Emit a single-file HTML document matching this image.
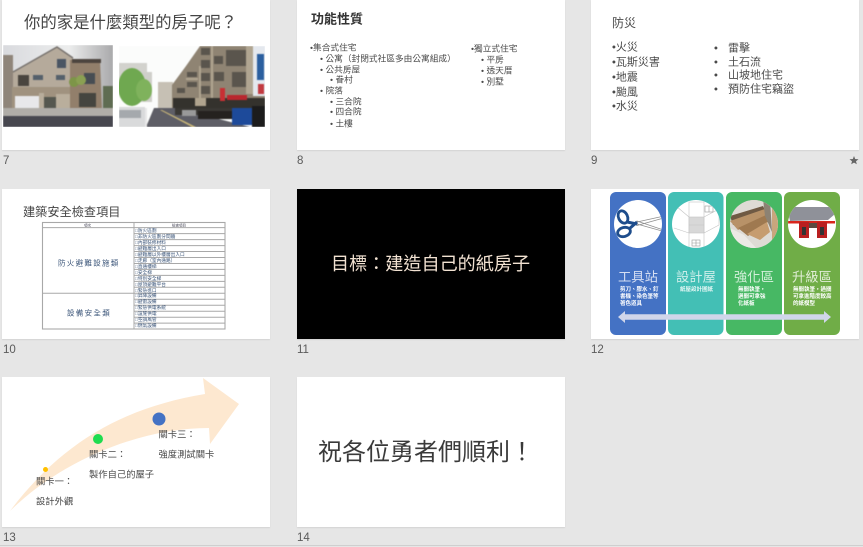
<!DOCTYPE html>
<html lang="zh-Hant"><head><meta charset="utf-8"><title>slides</title>
<style>
html,body{margin:0;padding:0;width:863px;height:547px;overflow:hidden;background:#e6e6e6}
body{position:relative;font-family:"Liberation Sans","Noto Sans CJK TC",sans-serif;color:#4a4a4a}
.s{position:absolute;width:268px;height:150px;background:#fff;box-shadow:0 1px 1px #d4d4d4}
.n{position:absolute;font-size:11.500px;line-height:14px;color:#5a5a5a}
.t{position:absolute;white-space:nowrap;line-height:1;transform:translateY(calc(-50% + 1px));filter:blur(.3px)}
.b{position:absolute;white-space:nowrap;filter:blur(.25px)}
svg{position:absolute;left:0;top:0}
</style></head><body>
<div class="s" style="left:2px;top:0"></div>
<div class="s" style="left:297px;top:0"></div>
<div class="s" style="left:591px;top:0"></div>
<div class="s" style="left:2px;top:189px"></div>
<div class="s" style="left:297px;top:189px;background:#000"></div>
<div class="s" style="left:591px;top:189px"></div>
<div class="s" style="left:2px;top:377px"></div>
<div class="s" style="left:297px;top:377px"></div>
<div style="position:absolute;left:0;top:545px;width:863px;height:1px;background:#cfcfcf"></div>

<div class="n" style="left:3px;top:154px">7</div>
<div class="n" style="left:297px;top:154px">8</div>
<div class="n" style="left:591px;top:154px">9</div>
<div class="n" style="left:3px;top:343px">10</div>
<div class="n" style="left:297px;top:343px">11</div>
<div class="n" style="left:591px;top:343px">12</div>
<div class="n" style="left:3px;top:531px">13</div>
<div class="n" style="left:297px;top:531px">14</div>

<svg width="863" height="547" viewBox="0 0 863 547">
<defs>
<clipPath id="p1"><rect x="3" y="45" width="110" height="82"/></clipPath>
<clipPath id="p2"><rect x="119" y="46" width="146" height="81"/></clipPath>
<clipPath id="c1"><circle cx="638" cy="224" r="24"/></clipPath>
<clipPath id="c2"><circle cx="696" cy="224" r="24"/></clipPath>
<clipPath id="c3"><circle cx="754" cy="224" r="24"/></clipPath>
<clipPath id="c4"><circle cx="812" cy="224" r="24"/></clipPath>
<linearGradient id="sky" x1="0" y1="0" x2="1" y2="0"><stop offset="0" stop-color="#d9dade"/><stop offset=".6" stop-color="#eceded"/><stop offset="1" stop-color="#a9a9ab"/></linearGradient>
</defs>
<!-- star -->
<path d="M854 156l1.200 3 3.300.2-2.500 2 .8 3.100-2.800-1.700-2.800 1.700.8-3.100-2.500-2 3.300-.2z" fill="#666"/>

<!-- photo 1 -->
<g clip-path="url(#p1)"><g style="filter:blur(.5px)">
<rect x="3" y="45" width="110" height="82" fill="url(#sky)"/>
<rect x="3" y="55" width="10" height="53" fill="#8f857a"/>
<polygon points="13,72 57,47 73,58 73,108 13,108" fill="#b5aa9b"/>
<polyline points="13,72 57,47 73,58" fill="none" stroke="#77726e" stroke-width="1.400"/>
<rect x="12" y="87" width="60" height="21" fill="#a0927f"/>
<polygon points="70,60 100,59 102,108 70,108" fill="#927f6b"/>
<rect x="72" y="59" width="29" height="4" fill="#4d453f"/>
<rect x="57" y="59" width="9" height="9" fill="#4a5563"/>
<rect x="18" y="75" width="11" height="11" fill="#49453f"/>
<rect x="33" y="75" width="10" height="5" fill="#55606b"/>
<rect x="56" y="75" width="9" height="5" fill="#55606b"/>
<rect x="84" y="73" width="11" height="11" fill="#474d53"/>
<rect x="79" y="93" width="17" height="14" fill="#45453f"/>
<rect x="15" y="96" width="24" height="12" fill="#e8e8ea"/>
<rect x="39" y="93" width="5" height="19" fill="#b8ad9b"/>
<rect x="44" y="97" width="12" height="14" fill="#55574f"/>
<rect x="56" y="94" width="14" height="18" fill="#b9ae9c"/>
<circle cx="74" cy="82" r="5" fill="#7d9548"/><circle cx="81" cy="80" r="5" fill="#8aa052"/>
<rect x="103" y="86" width="10" height="22" fill="#5f6c52"/>
<rect x="3" y="108" width="110" height="8" fill="#b0ada8"/>
<rect x="3" y="116" width="110" height="11" fill="#47474f"/>
</g></g>
<!-- photo 2 -->
<g clip-path="url(#p2)"><g style="filter:blur(.6px)">
<rect x="119" y="46" width="146" height="81" fill="#fbfcfb"/>
<rect x="119" y="63" width="28" height="25" fill="#d2d2cd"/>
<rect x="140" y="72" width="12" height="30" fill="#cfcfca"/>
<rect x="158" y="82" width="15" height="26" fill="#c6c0b4"/>
<ellipse cx="132" cy="87" rx="14" ry="19" fill="#6fa850"/>
<ellipse cx="144" cy="90" rx="8" ry="11" fill="#7fb25c"/>
<polygon points="172,108 172,85 186,66 200,46 265,46 265,108" fill="#8f8473"/>
<g fill="#5a554d">
<rect x="201" y="48" width="9" height="7"/><rect x="201" y="60" width="9" height="8"/><rect x="201" y="73" width="9" height="8"/><rect x="201" y="86" width="9" height="8"/>
<rect x="226" y="50" width="20" height="16"/><rect x="232" y="72" width="26" height="15"/>
<rect x="214" y="56" width="9" height="8"/><rect x="214" y="72" width="10" height="9"/><rect x="187" y="72" width="10" height="5"/><rect x="187" y="82" width="10" height="5"/><rect x="177" y="88" width="8" height="5"/>
</g>
<g fill="#b0a591">
<rect x="211" y="46" width="2" height="52"/><rect x="199" y="66" width="2" height="32"/><rect x="246" y="46" width="7" height="48"/><rect x="186" y="78" width="12" height="2"/>
</g>
<rect x="173" y="98" width="92" height="10" fill="#34322d"/>
<rect x="195" y="98" width="11" height="8" fill="#b0a48e"/>
<rect x="220" y="88" width="5" height="13" fill="#c83034"/>
<rect x="227" y="95" width="20" height="5" fill="#b9272e"/>
<rect x="253" y="46" width="12" height="50" fill="#e4e8ee"/>
<rect x="257" y="54" width="7" height="26" fill="#2b5f9f"/>
<rect x="258" y="84" width="6" height="10" fill="#c23a40"/>
<polygon points="146,127 154,108 176,108 250,127" fill="#5e5e66"/>
<polygon points="160,110 162,110 196,127 192,127" fill="#c9b678"/>
<rect x="175" y="108" width="90" height="7" fill="#3a3834"/>
<rect x="182" y="110" width="14" height="6" fill="#999"/>
<rect x="198" y="111" width="34" height="8" fill="#25221f"/>
<rect x="232" y="108" width="21" height="17" fill="#1d4a9a"/>
<rect x="252" y="106" width="13" height="21" fill="#1c1c1c"/>
<rect x="119" y="107" width="26" height="20" fill="#d9dadb"/>
<rect x="119" y="110" width="22" height="8" fill="#a5a9ad"/>
<rect x="145" y="108" width="2" height="19" fill="#e8e8e8"/>
</g></g>

<!-- table -->
<g fill="none" stroke="#a8a8a8" stroke-width="1">
<rect x="42.500" y="222.500" width="182.500" height="106.500" stroke-width="1.100"/>
<line x1="134" y1="222" x2="134" y2="329"/>
<line x1="42" y1="227.600" x2="225" y2="227.600"/>
<line x1="42" y1="293.300" x2="134" y2="293.300"/>
<path d="M134 233.600H225M134 239.600H225M134 245.600H225M134 251.500H225M134 257.500H225M134 263.500H225M134 269.400H225M134 275.400H225M134 281.400H225M134 287.300H225M134 293.300H225M134 299.300H225M134 305.200H225M134 311.200H225M134 317.200H225M134 323.100H225"/>
</g>

<!-- slide 12 -->
<rect x="610" y="192" width="56" height="143" rx="6" fill="#4472c4"/>
<rect x="668" y="192" width="55.500" height="143" rx="6" fill="#43bfb5"/>
<rect x="726" y="192" width="56" height="143" rx="6" fill="#47b864"/>
<rect x="784" y="192" width="56" height="143" rx="6" fill="#70ad47"/>
<circle cx="638" cy="224" r="24" fill="#fff"/>
<circle cx="696" cy="224" r="24" fill="#fff"/>
<circle cx="754" cy="224" r="24" fill="#d9cfc2"/>
<circle cx="812" cy="224" r="24" fill="#fff"/>
<!-- scissors -->
<g clip-path="url(#c1)">
<path d="M637 222L662 216.500L662 218.500L637 225.500ZM637 224L662 231L662 229.500L637 221Z" stroke="#8d8d8d" stroke-width=".7" fill="#fff"/>
<ellipse cx="623" cy="217" rx="4.500" ry="6.500" fill="none" stroke="#1e4d8c" stroke-width="2.800" transform="rotate(-25 623 217)"/>
<ellipse cx="624" cy="232" rx="6.500" ry="4.500" fill="none" stroke="#1e4d8c" stroke-width="2.800" transform="rotate(-15 624 232)"/>
<path d="M627 222L637 224M629 229L637 222" stroke="#1e4d8c" stroke-width="3" fill="none"/>
</g>
<!-- paper house -->
<g clip-path="url(#c2)" fill="none" stroke="#c4c4c4" stroke-width=".6">
<rect x="689" y="202" width="15" height="46"/>
<rect x="689" y="217" width="15" height="16" fill="#d8d8d8"/>
<line x1="689" y1="225" x2="704" y2="225"/>
<path d="M704 217L719 209M704 233L719 225M689 217L676 206M689 233L674 228M676 206V194M719 209V225"/>
<rect x="705" y="206" width="8" height="6" stroke="#999"/>
<rect x="692" y="240" width="8" height="6" stroke="#999"/>
<path d="M709 206V212M696 240V246M692 243H700" stroke="#999"/>
</g>
<!-- stairs -->
<g clip-path="url(#c3)">
<rect x="728" y="198" width="52" height="52" fill="#dedbd5"/>
<polygon points="730,216 763,206 766,212 733,225" fill="#6f5a44"/>
<polygon points="730,221 765,209 767,216 738,230" fill="#b89268"/>
<polygon points="738,228 766,215 768,222 748,236" fill="#9f7950"/>
<polygon points="747,234 767,222 770,232 760,240" fill="#c69c6f"/>
<polygon points="763,199 770,199 772,232 765,216" fill="#8c8273"/>
<polygon points="772,199 779,205 779,234 772,240" fill="#c8a67d"/>
<polygon points="730,228 744,235 758,250 736,250" fill="#ebe9e5"/>
</g>
<!-- temple -->
<g clip-path="url(#c4)">
<polygon points="788,212 795,207 835,207 835,214 828,220 790,221" fill="#8f9199"/>
<rect x="788" y="221" width="47" height="2.500" fill="#d8261c"/>
<rect x="799" y="222" width="10" height="16" fill="#b91f20"/>
<rect x="817" y="222" width="10" height="16" fill="#b91f20"/>
<rect x="802" y="227" width="4" height="8" fill="#333"/><rect x="820" y="227" width="4" height="8" fill="#333"/>
<rect x="809" y="223" width="8" height="5" fill="#5c4a40"/>
</g>
<!-- arrow 12 -->
<path d="M618 317L625 311V314.300H824V311L831 317L824 323V319.700H625V323Z" fill="#d0d6ea"/>

<!-- arrow 13 -->
<path d="M10 511C60 445 120 408 205 394L203 378L239 404L210 444L209 428C140 428 62 460 10 511Z" fill="#fde8d0"/>
<circle cx="45.500" cy="469.500" r="2.500" fill="#ffc000"/>
<circle cx="98" cy="439" r="5" fill="#1fdc4f"/>
<circle cx="159" cy="419" r="6.500" fill="#4472c4"/>
</svg>

<!-- slide 7 -->
<div class="t" style="left:24px;top:22px;font-size:16.400px;color:#444">你的家是什麼類型的房子呢？</div>
<!-- slide 8 -->
<div class="t" style="left:311px;top:18px;font-size:13px;font-weight:700;color:#333">功能性質</div>
<div class="t" style="left:310px;top:47px;font-size:8.700px">•集合式住宅</div>
<div class="t" style="left:320px;top:58px;font-size:8.700px;width:136px;overflow:hidden;padding:1px 0">•&nbsp;公寓（封閉式社區多由公寓組成）</div>
<div class="t" style="left:320px;top:69px;font-size:8.700px">•&nbsp;公共房屋</div>
<div class="t" style="left:330px;top:79px;font-size:8.700px">•&nbsp;眷村</div>
<div class="t" style="left:320px;top:90px;font-size:8.700px">•&nbsp;院落</div>
<div class="t" style="left:330px;top:101px;font-size:8.700px">•&nbsp;三合院</div>
<div class="t" style="left:330px;top:111px;font-size:8.700px">•&nbsp;四合院</div>
<div class="t" style="left:330px;top:123px;font-size:8.700px">•&nbsp;土樓</div>
<div class="t" style="left:471px;top:48px;font-size:8.700px">•獨立式住宅</div>
<div class="t" style="left:481px;top:59px;font-size:8.700px">•&nbsp;平房</div>
<div class="t" style="left:481px;top:70px;font-size:8.700px">•&nbsp;透天厝</div>
<div class="t" style="left:481px;top:81px;font-size:8.700px">•&nbsp;別墅</div>
<!-- slide 9 -->
<div class="t" style="left:612px;top:22px;font-size:12px">防災</div>
<div class="t" style="left:612px;top:47px;font-size:11px">•火災</div>
<div class="t" style="left:612px;top:61.500px;font-size:11px">•瓦斯災害</div>
<div class="t" style="left:612px;top:76.500px;font-size:11px">•地震</div>
<div class="t" style="left:612px;top:91.500px;font-size:11px">•颱風</div>
<div class="t" style="left:612px;top:106px;font-size:11px">•水災</div>
<div class="t" style="left:714px;top:48px;font-size:11px">•</div><div class="t" style="left:728px;top:48px;font-size:11px">雷擊</div>
<div class="t" style="left:714px;top:62px;font-size:11px">•</div><div class="t" style="left:728px;top:62px;font-size:11px">土石流</div>
<div class="t" style="left:714px;top:75px;font-size:11px">•</div><div class="t" style="left:728px;top:75px;font-size:11px">山坡地住宅</div>
<div class="t" style="left:714px;top:89px;font-size:11px">•</div><div class="t" style="left:728px;top:89px;font-size:11px">預防住宅竊盜</div>
<!-- slide 10 -->
<div class="t" style="left:23px;top:211px;font-size:12.200px;color:#444">建築安全檢查項目</div>
<div class="t" style="left:58px;top:261.500px;font-size:7.500px;letter-spacing:1.300px;color:#3a5478">防火避難設施類</div>
<div class="t" style="left:67px;top:312px;font-size:7.500px;letter-spacing:1.300px;color:#3a5478">設備安全類</div>
<div class="t" style="left:84px;top:224.500px;font-size:3.500px;color:#445">項次</div>
<div class="t" style="left:172px;top:224.500px;font-size:3.500px;color:#445">檢查項目</div>
<div class="b" style="left:135px;top:228px;font-size:4.700px;line-height:5.960px;color:#3a5478">□防火區劃<br>□非防火區劃分間牆<br>□內部裝修材料<br>□避難層出入口<br>□避難層以外樓層出入口<br>□走廊（室內通路）<br>□直通樓梯<br>□安全梯<br>□特別安全梯<br>□屋頂避難平台<br>□緊急進口<br>□昇降設備<br>□避雷設備<br>□緊急供電系統<br>□設施供電<br>□空調風管<br>□燃氣設備</div>
<!-- slide 11 -->
<div class="t" style="left:331px;top:263px;font-size:18.100px;color:#f2e2d2">目標：建造自己的紙房子</div>
<!-- slide 12 -->
<div class="t" style="left:618px;top:276px;font-size:13.300px;color:#d5def2">工具站</div>
<div class="t" style="left:676px;top:276px;font-size:13.300px;color:#cdeeea">設計屋</div>
<div class="t" style="left:734px;top:276px;font-size:13.300px;color:#d3f0da">強化區</div>
<div class="t" style="left:792px;top:276px;font-size:13.300px;color:#e0edd5">升級區</div>
<div class="b" style="left:620px;top:287px;font-size:5.500px;line-height:7.200px;color:#fff;font-weight:700">剪刀、膠水、釘<br>書機、染色筆等<br>著色道具</div>
<div class="b" style="left:680px;top:287px;font-size:5.500px;line-height:7.200px;color:#e6f7f5;font-weight:700">紙屋設計圖紙</div>
<div class="b" style="left:738px;top:287px;font-size:5.500px;line-height:7.200px;color:#fff;font-weight:700">無關執筆，<br>過關可拿強<br>化紙板</div>
<div class="b" style="left:793px;top:287px;font-size:5.500px;line-height:7.200px;color:#fff;font-weight:700">無關執筆，過關<br>可拿進階度較高<br>的紙模型</div>
<!-- slide 13 -->
<div class="t" style="left:36px;top:481px;font-size:9.300px">關卡一：</div>
<div class="t" style="left:36px;top:501px;font-size:9.300px">設計外觀</div>
<div class="t" style="left:89px;top:454px;font-size:9.300px">關卡二：</div>
<div class="t" style="left:89px;top:473.500px;font-size:9.300px">製作自己的屋子</div>
<div class="t" style="left:158.500px;top:434px;font-size:9.300px">關卡三：</div>
<div class="t" style="left:158.500px;top:454px;font-size:9.300px">強度測試關卡</div>
<!-- slide 14 -->
<div class="t" style="left:318px;top:452px;font-size:24px;color:#3a3a3a">祝各位勇者們順利！</div>
</body></html>
